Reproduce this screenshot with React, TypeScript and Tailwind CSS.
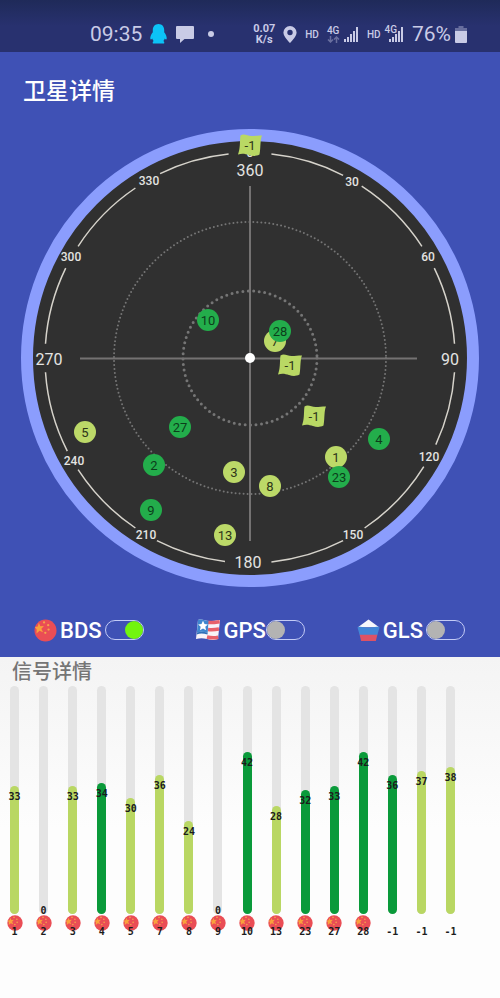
import { useState } from "react";

type System = "BDS" | "GPS" | "GLS";

interface Satellite {
    id: number;
    x: number;
    y: number;
    used?: boolean;
    flag?: boolean;
}

interface Signal {
    id: number;
    snr: number;
    used?: boolean;
}

// x and y are measured from the middle of the dial
const satellites: Satellite[] = [
    { id: -1, x: 0, y: -213, flag: true },
    { id: 10, x: -42, y: -38, used: true },
    { id: 7, x: 25, y: -17 },
    { id: 28, x: 30, y: -27, used: true },
    { id: -1, x: 40, y: 7, flag: true },
    { id: -1, x: 64, y: 58, flag: true },
    { id: 4, x: 129, y: 81, used: true },
    { id: 1, x: 86, y: 99 },
    { id: 23, x: 89, y: 119, used: true },
    { id: 8, x: 20, y: 128 },
    { id: 3, x: -16, y: 114 },
    { id: 13, x: -25, y: 177 },
    { id: 9, x: -99, y: 152, used: true },
    { id: 2, x: -96, y: 107, used: true },
    { id: 27, x: -70, y: 69, used: true },
    { id: 5, x: -165, y: 74 },
];

const degrees = [
    { text: "0", x: 0, y: -205 },
    { text: "360", x: 0, y: -188, big: true },
    { text: "30", x: 102, y: -176 },
    { text: "60", x: 178, y: -101 },
    { text: "90", x: 200, y: 1, big: true },
    { text: "120", x: 179, y: 99 },
    { text: "150", x: 103, y: 177 },
    { text: "180", x: -2, y: 204, big: true },
    { text: "210", x: -104, y: 177 },
    { text: "240", x: -176, y: 103 },
    { text: "270", x: -201, y: 1, big: true },
    { text: "300", x: -179, y: -101 },
    { text: "330", x: -101, y: -177 },
];

// start and end bearing of each piece of the outer scale
const arcs = [
    [6, 27],
    [33, 57],
    [64, 86],
    [94, 115],
    [122, 146],
    [153, 174],
    [187, 207],
    [214, 237],
    [243, 266],
    [274, 296],
    [303, 326],
    [334, 354],
];

const signals: Signal[] = [
    { id: 1, snr: 33 },
    { id: 2, snr: 0 },
    { id: 3, snr: 33 },
    { id: 4, snr: 34, used: true },
    { id: 5, snr: 30 },
    { id: 7, snr: 36 },
    { id: 8, snr: 24 },
    { id: 9, snr: 0 },
    { id: 10, snr: 42, used: true },
    { id: 13, snr: 28 },
    { id: 23, snr: 32, used: true },
    { id: 27, snr: 33, used: true },
    { id: 28, snr: 42, used: true },
    { id: -1, snr: 36, used: true },
    { id: -1, snr: 37 },
    { id: -1, snr: 38 },
];

const MAX_SNR = 59;

function arcPath([from, to]: number[], r: number) {
    const point = (deg: number) => {
        const a = (deg * Math.PI) / 180;
        return `${(r * Math.sin(a)).toFixed(1)} ${(-r * Math.cos(a)).toFixed(1)}`;
    };
    return `M${point(from)}A${r} ${r} 0 0 1 ${point(to)}`;
}

function ChinaIcon({ className }: { className: string }) {
    return (
        <svg viewBox="0 0 24 24" className={className} aria-hidden="true">
            <circle cx="12" cy="12" r="11.5" fill="#ea4d55" />
            <path d="M5 4l1.6 3.5 3.8-.2-2.7 2.8 1.7 3.6-3.6-1.4L2.6 15l.2-4L.8 8.3l3.2-.6z" fill="#f9a13c" />
            <g fill="#f4a44a">
                <circle cx="10.5" cy="3.6" r="1.2" />
                <circle cx="14.8" cy="6.4" r="1.2" />
                <circle cx="15.2" cy="11" r="1.2" />
                <circle cx="11.8" cy="14.4" r="1.2" />
            </g>
        </svg>
    );
}

function UsaIcon({ className }: { className: string }) {
    return (
        <svg viewBox="0 0 24 24" className={className} aria-hidden="true">
            <path d="M2 2c4-1.500 7 1 11 1s7-.5 11-1l-2 19c-4 1.500-7 1-11 0s-7-1-11 0z" fill="#f8f3f8" />
            <g fill="none" stroke="#e8606b" strokeWidth="3.500">
                <path d="M12 4.500c4 .3 7.500-.2 11.700-.8" />
                <path d="M12 11.500c4 .6 7.200.2 11-.5" />
                <path d="M11 19c4 1 7.500 1.200 11.200.200" />
            </g>
            <path d="M2 2c4-1.500 7 .8 10.500 1l-.8 11.500C8 14 4.500 13 .9 14.500z" fill="#3f86cf" />
            <path d="M.9 14.500C4.500 13 8 14 11.700 14.500l-.2 2C7.500 15.500 4.500 15 .7 16.500z" fill="#2f6fb8" />
            <path d="M7 2.800l1.500 3.300 3.400.3-2.600 2.300.8 3.500L7 10.400l-3.100 1.800.8-3.500L2.100 6.400l3.400-.3z" fill="#fff" />
        </svg>
    );
}

function RussiaIcon({ className }: { className: string }) {
    return (
        <svg viewBox="0 0 24 24" className={className} aria-hidden="true">
            <path d="M1 8.500L12 .5l11 8z" fill="#f7f7fb" />
            <path d="M.5 8.500c4-1 7 .5 11.500.5s7.500-1.500 11.500-.5l-2.300 8.500H2.800z" fill="#4186d6" />
            <path d="M2.800 16.500h18.400l-1.500 6.500H4.300z" fill="#dc5265" />
        </svg>
    );
}

function SignalBars() {
    return (
        <svg viewBox="0 0 15 16" className="h-4 w-[15px]" fill="currentColor" aria-hidden="true">
            <path d="M0 13h2v3H0zM3 11h2v5H3zM6 8h2v8H6zM9 5h2v11H9zM12 1h2v15h-2z" />
        </svg>
    );
}

function StatusBar() {
    return (
        <div className="flex h-13 items-center justify-between bg-linear-to-b from-[#1f2a59] to-[#28316f] to-50% pt-4 pr-[33px] pl-[90px] text-[#c9cbe6]">
            <div className="flex items-center">
                <span className="text-[21px] leading-6">09:35</span>
                <svg viewBox="0 0 17 20" className="ml-2 h-5 w-[17px]" fill="#0cc3f7" aria-hidden="true">
                    <path d="M8.500 0C4.800 0 2.800 2.800 2.800 6v2.200C1.200 10.200 0 12.800.3 14.800c.2 1 1.200.8 2-.4.2 1 .7 1.900 1.400 2.600-1 .5-1.200 1.400-.8 2.400h11.200c.4-1 .2-1.900-.8-2.400.7-.7 1.200-1.600 1.400-2.600.8 1.200 1.800 1.400 2 .4.300-2-.9-4.600-2.500-6.600V6c0-3.200-2-6-5.700-6z" />
                </svg>
                <svg viewBox="0 0 18 17" className="ml-[9px] h-[17px] w-[18px]" fill="currentColor" aria-hidden="true">
                    <path d="M1 0h16a1 1 0 0 1 1 1v11a1 1 0 0 1-1 1H8.500L4 17v-4H1a1 1 0 0 1-1-1V1a1 1 0 0 1 1-1z" />
                </svg>
                <span className="ml-3.5 size-[6px] rounded-full bg-current" />
            </div>
            <div className="flex items-center">
                <div className="text-center text-[11px] leading-[11px] font-bold">
                    <div>0.07</div>
                    <div>K/s</div>
                </div>
                <svg viewBox="0 0 14 17" className="ml-2 h-[17px] w-3.5" fill="currentColor" fillRule="evenodd" aria-hidden="true">
                    <path d="M7 0a6.600 6.600 0 0 0-6.600 6.600C.4 11 7 17 7 17s6.600-6 6.600-10.400A6.600 6.600 0 0 0 7 0zm0 3.800a2.700 2.700 0 1 1 0 5.400 2.700 2.700 0 0 1 0-5.400z" />
                </svg>
                <span className="ml-2 text-[10px] font-medium">HD</span>
                <div className="ml-2 text-[10px] leading-[10px] font-medium">
                    <div>4G</div>
                    <svg viewBox="0 0 13 7" className="h-[7px] w-[13px] opacity-40" fill="none" stroke="currentColor" strokeWidth="1.500" aria-hidden="true">
                        <path d="M3.500 0v6M1 3.500L3.500 6 6 3.500M9.500 7V1M7 3.500L9.500 1 12 3.500" />
                    </svg>
                </div>
                <div className="ml-1">
                    <SignalBars />
                </div>
                <span className="ml-2 text-[10px] font-medium">HD</span>
                <span className="ml-1 pb-2 text-[10px] leading-[10px] font-medium">4G</span>
                <div className="-ml-2">
                    <SignalBars />
                </div>
                <span className="ml-2 text-[21px] leading-6">76%</span>
                <svg viewBox="0 0 12 17" className="ml-1 h-[17px] w-3" fill="currentColor" aria-hidden="true">
                    <path d="M3.500 0h5v2H12v4H0V2h3.500z" opacity=".4" />
                    <path d="M0 5h12v11a1 1 0 0 1-1 1H1a1 1 0 0 1-1-1z" />
                </svg>
            </div>
        </div>
    );
}

function SatelliteMark({ id, x, y, used, flag }: Satellite) {
    return (
        <g transform={`translate(${x} ${y})`}>
            {flag ? (
                <path d="M-9.500-9.500c3.500-2.500 7 .5 11 .5s6-.5 10.500-.5c-1 2-1.200 5-1.500 8s-.2 7-1 11c-4 2-7 1.500-10.500.500s-6.500-2-11-.500c1-3 1.500-5.500 1.800-9s.2-7 .7-10z" fill="#b9d864" />
            ) : (
                <circle r="11" fill={used ? "#23ad4b" : "#bcd968"} />
            )}
            <text y="5" textAnchor="middle" fontSize="13" fill={used ? "#0c3d1b" : "#2d3518"}>
                {id}
            </text>
        </g>
    );
}

function SkyPlot() {
    return (
        <svg viewBox="-250 -236 500 472" className="block w-full" role="img" aria-label="卫星详情">
            <circle r="223" fill="#303030" stroke="#8b9dfd" strokeWidth="12" />
            <g fill="none" stroke="#d6d3cb" strokeWidth="1.500">
                {arcs.map((arc) => (
                    <path key={arc[0]} d={arcPath(arc, 205)} />
                ))}
            </g>
            <g fill="none" stroke="#757575" strokeLinecap="round">
                <circle r="136" strokeWidth="2" strokeDasharray="0 4" />
                <circle r="67" strokeWidth="3" strokeDasharray="0 5.500" />
            </g>
            <path d="M-170 .5H167M0-172V183" stroke="#747272" strokeWidth="2" />
            <circle r="5" fill="#fff" />
            {degrees.map(({ text, x, y, big }) => (
                <text
                    key={text}
                    x={x}
                    y={big ? y + 6 : y + 4}
                    textAnchor="middle"
                    fontSize={big ? 16 : 12}
                    fontWeight={big ? 400 : 500}
                    fill="#e4e4e2"
                >
                    {text}
                </text>
            ))}
            {satellites.map((satellite, i) => (
                <SatelliteMark key={i} {...satellite} />
            ))}
        </svg>
    );
}

interface SystemSwitchProps {
    name: System;
    icon: React.ReactNode;
    checked: boolean;
    tight?: boolean;
    onToggle: (name: System) => void;
}

function SystemSwitch({ name, icon, checked, tight, onToggle }: SystemSwitchProps) {
    return (
        <label className="flex h-7 items-center text-[22px] font-medium text-white">
            {icon}
            <span className={tight ? "ml-1" : "mr-[3px] ml-[3px]"}>{name}</span>
            <input
                type="checkbox"
                role="switch"
                checked={checked}
                onChange={() => onToggle(name)}
                className="flex h-5 w-[39px] appearance-none items-center rounded-full border border-[#c3cbf6] before:size-[18px] before:rounded-full before:bg-[#b3b3b3] checked:justify-end checked:before:bg-[#72f50e]"
            />
        </label>
    );
}

function SignalBar({ id, snr, used }: Signal) {
    const color = snr === 0 ? "" : used ? "bg-[#0a9a3a]" : "bg-[#b9d763]";
    return (
        <li className="flex flex-1 flex-col items-center font-['DejaVu_Sans_Mono',monospace] text-[10px] leading-[10px] font-bold text-[#1c1c1c]">
            <div className="flex h-[228px] w-[9px] flex-col justify-end rounded-full bg-[#e4e4e4]">
                <div
                    className={`flex min-h-3.5 justify-center rounded-full pt-1.5 ${color}`}
                    style={{ height: `${(snr / MAX_SNR) * 100}%` }}
                >
                    <span>{snr}</span>
                </div>
            </div>
            <div className="mt-[1px] h-4">{id > 0 && <ChinaIcon className="size-4" />}</div>
            <span className="relative -mt-1">{id}</span>
        </li>
    );
}

function App() {
    const [enabled, setEnabled] = useState<Record<System, boolean>>({ BDS: true, GPS: false, GLS: false });
    const toggle = (name: System) => setEnabled((prev) => ({ ...prev, [name]: !prev[name] }));

    return (
        <div className="flex min-h-screen flex-col font-['Roboto','Noto_Sans_CJK_SC',sans-serif]">
            <StatusBar />
            <main className="flex flex-1 flex-col bg-[#3f51b5]">
                <h1 className="flex h-[70px] items-center pt-2.5 pl-[23px] text-[23px] font-medium text-white">卫星详情</h1>
                <SkyPlot />
                <div className="flex justify-between pt-[22px] pr-[35px] pb-[13px] pl-[34px]">
                    <SystemSwitch name="BDS" icon={<ChinaIcon className="size-[23px]" />} checked={enabled.BDS} onToggle={toggle} />
                    <SystemSwitch name="GPS" icon={<UsaIcon className="size-6" />} checked={enabled.GPS} onToggle={toggle} tight />
                    <SystemSwitch name="GLS" icon={<RussiaIcon className="size-[23px]" />} checked={enabled.GLS} onToggle={toggle} />
                </div>
                <section className="flex-1 bg-linear-to-b from-[#f4f4f4] to-[#fdfdfd] to-50%">
                    <h2 className="pt-[1px] pl-3 text-xl leading-7 font-medium text-[#757575]">信号详情</h2>
                    <ul className="flex pr-[35px]">
                        {signals.map((signal, i) => (
                            <SignalBar key={i} {...signal} />
                        ))}
                    </ul>
                </section>
            </main>
        </div>
    );
}

export default App;
